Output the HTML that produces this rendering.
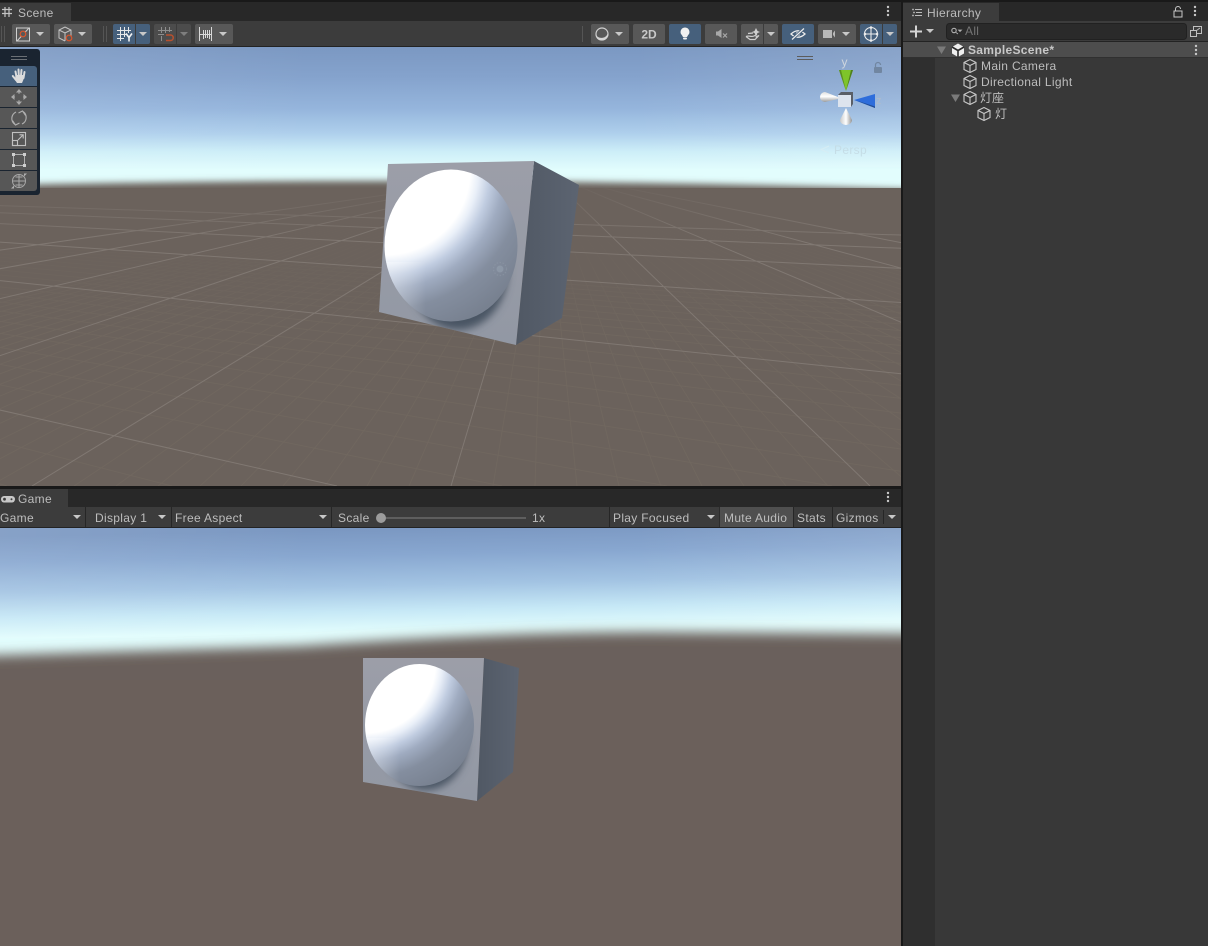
<!DOCTYPE html>
<html lang="en">
<head>
<meta charset="utf-8">
<title>Unity Editor</title>
<style>
html,body{margin:0;padding:0;background:#191919;width:1208px;height:946px;overflow:hidden}
svg{display:block;position:absolute;left:0;top:0}
text{font-family:"Liberation Sans","Noto Sans CJK SC",sans-serif;font-size:12px;letter-spacing:.32px;fill:#bdbdbd}
</style>
</head>
<body>
<svg width="1208" height="946" viewBox="0 0 1208 946" xmlns="http://www.w3.org/2000/svg">
<defs>
<linearGradient id="skyS" gradientUnits="userSpaceOnUse" x1="450" y1="47" x2="450" y2="170">
<stop offset="0" stop-color="#7b98c2"/><stop offset=".25" stop-color="#85a3cd"/><stop offset=".5" stop-color="#95b5dc"/><stop offset=".7" stop-color="#aecfec"/><stop offset=".85" stop-color="#cdeef8"/><stop offset="1" stop-color="#e2fdfd"/>
</linearGradient>
<linearGradient id="skyG" gradientUnits="userSpaceOnUse" x1="448" y1="528" x2="450" y2="630">
<stop offset="0" stop-color="#7b98c2"/><stop offset=".25" stop-color="#88a7d0"/><stop offset=".55" stop-color="#a3c4e3"/><stop offset=".8" stop-color="#c6e8f6"/><stop offset="1" stop-color="#e2fdfd"/>
</linearGradient>
<linearGradient id="edge" x1="0" x2="1" y1="0" y2="0">
<stop offset="0" stop-color="#fff" stop-opacity=".09"/><stop offset=".35" stop-color="#fff" stop-opacity="0"/><stop offset=".7" stop-color="#fff" stop-opacity="0"/><stop offset="1" stop-color="#fff" stop-opacity=".1"/>
</linearGradient>
<linearGradient id="fadeMin" gradientUnits="userSpaceOnUse" x1="0" y1="188" x2="0" y2="330">
<stop offset="0" stop-color="#6b625c" stop-opacity="1"/><stop offset=".4" stop-color="#6b625c" stop-opacity=".85"/><stop offset="1" stop-color="#6b625c" stop-opacity="0"/>
</linearGradient>
<linearGradient id="fadeMaj" gradientUnits="userSpaceOnUse" x1="0" y1="188" x2="0" y2="240">
<stop offset="0" stop-color="#6b625c" stop-opacity=".9"/><stop offset="1" stop-color="#6b625c" stop-opacity="0"/>
</linearGradient>
<filter id="b4" x="-5%" y="-20%" width="110%" height="140%"><feGaussianBlur stdDeviation="3.500"/></filter>
<filter id="b6" x="-5%" y="-20%" width="110%" height="140%"><feGaussianBlur stdDeviation="6"/></filter>
<filter id="sh" x="-30%" y="-30%" width="160%" height="160%"><feGaussianBlur stdDeviation="4"/></filter>
<clipPath id="cS"><rect x="0" y="47" width="901" height="439"/></clipPath>
<clipPath id="cG"><rect x="0" y="528" width="901" height="418"/></clipPath>
<clipPath id="cGrid"><rect x="0" y="188" width="901" height="298"/></clipPath>
<clipPath id="fS"><path d="M388 164L534 161 516 345 379 312Z"/></clipPath>
<clipPath id="fG"><path d="M363 658H484L477 801 363 782Z"/></clipPath>
<clipPath id="sS"><ellipse cx="451" cy="245.500" rx="66.500" ry="76"/></clipPath>
<clipPath id="sG"><ellipse cx="419.500" cy="725" rx="54.500" ry="61"/></clipPath>
<radialGradient id="ballS" gradientUnits="userSpaceOnUse" cx="385" cy="170" r="170">
<stop offset="0" stop-color="#fff"/><stop offset=".5" stop-color="#fff"/><stop offset=".55" stop-color="#e9eff8"/><stop offset=".62" stop-color="#c0cce0"/><stop offset=".7" stop-color="#9fabc0"/><stop offset=".82" stop-color="#848e9f"/><stop offset="1" stop-color="#788190"/>
</radialGradient>
<radialGradient id="ballG" gradientUnits="userSpaceOnUse" cx="365.500" cy="663" r="140">
<stop offset="0" stop-color="#fff"/><stop offset=".5" stop-color="#fff"/><stop offset=".55" stop-color="#e9eff8"/><stop offset=".62" stop-color="#c0cce0"/><stop offset=".7" stop-color="#9fabc0"/><stop offset=".82" stop-color="#848e9f"/><stop offset="1" stop-color="#788190"/>
</radialGradient>
<linearGradient id="lowL" x1="0" x2="1" y1="0" y2="0"><stop offset="0" stop-color="#fff" stop-opacity=".4"/><stop offset=".6" stop-color="#fff" stop-opacity="0"/></linearGradient>
<linearGradient id="sideS" x1="0" x2="1" y1="0" y2="0"><stop offset="0" stop-color="#505864"/><stop offset="1" stop-color="#5c6471"/></linearGradient>
<linearGradient id="frontS" x1="0" x2="0" y1="0" y2="1"><stop offset="0" stop-color="#9c9ea8"/><stop offset="1" stop-color="#9298a4"/></linearGradient>
<linearGradient id="wc" x1="0" x2="0" y1="0" y2="1"><stop offset="0" stop-color="#e0e0e0"/><stop offset=".45" stop-color="#ffffff"/><stop offset="1" stop-color="#9a9a9a"/></linearGradient>
<linearGradient id="wv" x1="0" x2="1" y1="0" y2="0"><stop offset="0" stop-color="#c8c8c8"/><stop offset=".5" stop-color="#ffffff"/><stop offset="1" stop-color="#949494"/></linearGradient>
<path id="a" d="M-4-2H4L0 2Z" fill="#c8c8c8"/>
<path id="ad" d="M-4-2H4L0 2Z" fill="#7e7e7e"/>
<g id="k" fill="#c8c8c8"><circle cx="0" cy="-4" r="1.200"/><circle cx="0" cy="0" r="1.200"/><circle cx="0" cy="4" r="1.200"/></g>
<g id="cube" fill="none" stroke="#c8c8c8" stroke-width="1.100"><path d="M0-6.500L6-3.500V3.500L0 6.500-6 3.500V-3.500Z"/><path d="M-6-3.500L0-.5 6-3.500M0-.5V6.500"/></g>
</defs>

<!-- chrome -->
<rect width="1208" height="946" fill="#191919"/>
<rect x="0" y="2" width="901" height="19" fill="#282828"/>
<rect x="0" y="3" width="71" height="18" fill="#3c3c3c"/>
<rect x="0" y="21" width="901" height="25" fill="#3c3c3c"/>
<rect x="0" y="46" width="901" height="1" fill="#232323"/>

<!-- scene view -->
<g clip-path="url(#cS)">
<rect x="0" y="47" width="901" height="160" fill="url(#skyS)"/>
<rect x="0" y="47" width="901" height="120" fill="url(#edge)"/>
<path d="M-30 186Q450 174 930 190V500H-30Z" fill="#6b625c" filter="url(#b4)"/>
<rect x="0" y="200" width="901" height="286" fill="#6b625c"/>
<g clip-path="url(#cGrid)">
<!-- minor grid -->
<path fill="none" stroke="#70675f" stroke-width="1" d="M545 172L493 486M545 172L535 486M545 172L577 486M545 172L619 486M545 172L661 486M545 172L702 486M545 172L744 486M545 172L786 486M545 172L828 486M545 172L912 486M545 172L954 486M545 172L996 486M545 172L1038 486M545 172L1080 486M545 172L1122 486M545 172L1164 486M545 172L1206 486M545 172L1248 486M545 172L1331 486M545 172L1373 486M545 172L1415 486M545 172L1457 486M545 172L1499 486M545 172L1541 486M545 172L1583 486M545 172L1625 486M545 172L1667 486M545 172L409 486M545 172L367 486M545 172L325 486M545 172L283 486M545 172L241 486M545 172L200 486M545 172L158 486M545 172L116 486M545 172L74 486M545 172L-10 486M545 172L-52 486M545 172L-94 486M545 172L-136 486M545 172L-178 486M545 172L-219 486M545 172L-261 486M545 172L-303 486M545 172L-345 486M545 172L-429 486M545 172L-471 486M545 172L-513 486M545 172L-555 486M545 172L-597 486M545 172L-638 486M545 172L-680 486M545 172L-722 486M545 172L-764 486M-1061 171L502 486M-1061 171L667 486M-1061 171L832 486M-1061 171L997 486M-1061 171L1162 486M-1061 171L1327 486M-1061 171L1492 486M-1061 171L1657 486M-1061 171L1822 486M-1061 171L2152 486M-1061 171L2317 486M-1061 171L2482 486M-1061 171L2647 486M-1061 171L2812 486M-1061 171L2977 486M-1061 171L3142 486M-1061 171L3307 486M-1061 171L3472 486M-1061 171L172 486M-1061 171L7 486M-1061 171L-158 486M-1061 171L-323 486M-1061 171L-488 486M-1061 171L-653 486M-1061 171L-818 486M-1061 171L-983 486"/>
<rect x="0" y="188" width="901" height="142" fill="url(#fadeMin)"/>
<!-- major grid -->
<path fill="none" stroke="#807872" stroke-width="1" d="M545 172L451 486M545 172L32 486M545 172L870 486M545 172L1289 486M545 172L1708 486M545 172L2127 486M545 172L-387 486M545 172L-806 486M545 172L-1225 486M545 172L-1644 486M-1061 171L337 486M-1061 171L1987 486M-1061 171L3637 486M-1061 171L5287 486M-1061 171L6937 486M-1061 171L8587 486"/>
<rect x="0" y="188" width="901" height="52" fill="url(#fadeMaj)"/>
</g>
<!-- cube -->
<path d="M534 161L579 185 562 318 516 345Z" fill="url(#sideS)"/>
<path d="M388 164L534 161 516 345 379 312Z" fill="url(#frontS)"/>
<g clip-path="url(#fS)"><ellipse cx="458" cy="270" rx="50" ry="60" fill="#4a5464" filter="url(#sh)"/></g>
<ellipse cx="451" cy="245.500" rx="66.500" ry="76" fill="url(#ballS)"/>
<g clip-path="url(#sS)">
<rect x="384" y="262" width="70" height="60" fill="url(#lowL)"/>
</g>
<circle cx="500" cy="269" r="3.500" fill="#9aa5b3" opacity=".5"/>
<circle cx="500" cy="269" r="6.500" fill="none" stroke="#8f9aa8" stroke-width="1.300" stroke-dasharray="1.500 1.500" opacity=".5"/>
<!-- drag handle -->
<path d="M797 56.500H813M797 59.500H813" stroke="#5c5c5c" stroke-width="1"/>
<!-- gizmo -->
<g>
<rect x="874" y="67" width="8" height="6" rx="1" fill="#7186a1"/>
<path d="M875.500 67V65a2.500 2.500 0 0 1 5 0" fill="none" stroke="#7186a1" stroke-width="1.200"/>
<text x="841.500" y="66" style="font-size:12px;letter-spacing:0;fill:#cdd5de">y</text>
<text x="876" y="104" style="font-size:11px;letter-spacing:0;fill:#aebccd">z</text>
<path d="M839 70H853L846 91Z" fill="#7ec42a"/>
<path d="M851 70H853L846 91Z" fill="#4f7f1e"/>
<path d="M841 70H839L846 91Z" fill="#5b8f20"/>
<path d="M854 100L875 94V108Z" fill="#2e6ddb"/>
<path d="M855 100L875 106.500V108Z" fill="#224d92"/>
<path d="M825 92L838 97V99L825 102A5 5 0 0 1 825 92Z" fill="url(#wc)"/>
<path d="M846 108L852 120A6 5 0 0 1 840 120Z" fill="url(#wv)"/>
<path d="M838 95L841 92H853V104L851 107H838Z" fill="#5a5f67"/>
<rect x="838" y="95" width="13" height="12" fill="#dde4ee"/>
<text x="834" y="154" style="font-size:12px;fill:#c5dde6">Persp</text>
<path d="M829 146L821 149.500 829 153" fill="none" stroke="#d6edf4" stroke-width="1"/>
</g>
<!-- tools panel -->
<path d="M0 49H37a3 3 0 0 1 3 3V192a3 3 0 0 1-3 3H0Z" fill="#1a2430"/>
<path d="M11 56.500H27M11 59.500H27" stroke="#6b7075" stroke-width="1"/>
<path d="M0 66H34a3 3 0 0 1 3 3V86H0Z" fill="#46607c"/>
<rect x="0" y="87" width="37" height="20" fill="#575757"/>
<rect x="0" y="108" width="37" height="20" fill="#575757"/>
<rect x="0" y="129" width="37" height="20" fill="#575757"/>
<rect x="0" y="150" width="37" height="20" fill="#575757"/>
<path d="M0 171H37V188a3 3 0 0 1-3 3H0Z" fill="#575757"/>
<!-- hand -->
<g stroke="#dcdcdc" stroke-width="2" stroke-linecap="round" fill="none"><path d="M15.500 71.500L16.500 77M18.500 69.500L18.800 76M21.500 70L21 76M24.500 72L23.500 78M12.800 76L16 80"/></g>
<path d="M15.500 75H24L23.500 79.500 22 83H17L15 80Z" fill="#dcdcdc"/>
<!-- move -->
<g fill="none" stroke="#a0a0a0" stroke-width="1"><path d="M19 90V94M19 100V104M12 97H15M23 97H26"/></g>
<g fill="#a8a8a8"><path d="M19 89L22 92.500H16ZM19 105L22 101.500H16ZM11 97L14.500 94V100ZM27 97L23.500 94V100Z"/></g>
<!-- rotate -->
<g fill="none" stroke="#b0b0b0" stroke-width="1.100"><path d="M15 124.500A7.200 7.200 0 0 1 16 112M23 111.500A7.200 7.200 0 0 1 22 124"/><path d="M12.500 120.500L15.500 125 19.500 123M25.500 115.500L22.500 111 18.500 113"/></g>
<!-- scale -->
<g fill="none" stroke="#c0c0c0" stroke-width="1.100"><rect x="12.500" y="132.500" width="13" height="13"/><rect x="12.500" y="140.500" width="5" height="5"/><path d="M18 140L23 135M19.500 134.800H23.200V138.500"/></g>
<!-- rect -->
<g fill="none" stroke="#b0b0b0" stroke-width="1"><rect x="13.500" y="154.500" width="11" height="11"/></g>
<g fill="#cfcfcf"><rect x="12" y="153" width="3" height="3"/><rect x="23" y="153" width="3" height="3"/><rect x="12" y="164" width="3" height="3"/><rect x="23" y="164" width="3" height="3"/></g>
<!-- transform -->
<g fill="none" stroke="#a8a8a8" stroke-width="1"><circle cx="19" cy="181" r="6.500"/><path d="M19 175V187M13 181H25M15.500 177H22.500M15.500 185H22.500"/></g>
<path d="M11 188.500L14 185.500V188.500ZM27 173.500L24 176.500V173.500Z" fill="#b0b0b0"/>
</g>

<!-- scene tab -->
<g fill="none" stroke="#c4c4c4" stroke-width="1.200"><path d="M5 7V17M9 7V17M2 9.500H12M2 13.500H12"/></g>
<text x="18" y="17">Scene</text>
<use href="#k" x="888" y="11"/>

<!-- scene toolbar -->
<path d="M1.500 26V42M4.500 26V42M103.500 26V42M106.500 26V42M582.500 26V42" stroke="#555" stroke-width="1"/>
<rect x="12" y="24" width="38" height="20" rx="2" fill="#585858"/>
<rect x="16.500" y="28" width="13" height="13" fill="none" stroke="#cfcfcf" stroke-width="1"/>
<path d="M17 41L29 28" stroke="#cfcfcf" stroke-width="1"/>
<circle cx="23" cy="34" r="2.800" fill="#585858" stroke="#d9542b" stroke-width="1.200"/>
<use href="#a" x="40" y="34"/>
<rect x="54" y="24" width="38" height="20" rx="2" fill="#585858"/>
<g fill="none" stroke="#c4c4c4" stroke-width="1"><path d="M65 27L71 30V36M65 27L59 30V38L65 41M59 30L65 33 71 30M65 33V41"/></g>
<circle cx="69" cy="38" r="2.800" fill="#585858" stroke="#d9542b" stroke-width="1.200"/>
<use href="#a" x="82" y="34"/>

<path d="M115 24H135V44H115a2 2 0 0 1-2-2V26a2 2 0 0 1 2-2Z" fill="#46607c"/>
<path d="M136 24H148a2 2 0 0 1 2 2V42a2 2 0 0 1-2 2H136Z" fill="#46607c"/>
<g fill="none" stroke="#e8e8e8" stroke-width="1"><path d="M120.500 27V41M124.500 27V37M128.500 27V33M117 30.500H131M117 34.500H127M117 38.500H124"/></g>
<path d="M126 33.500L129 37.500 132 33.500M129 37.500V41.500" fill="none" stroke="#f4f4f4" stroke-width="1.600"/>
<use href="#a" x="143" y="34"/>

<path d="M156 24H176V44H156a2 2 0 0 1-2-2V26a2 2 0 0 1 2-2Z" fill="#4c4c4c"/>
<path d="M177 24H189a2 2 0 0 1 2 2V42a2 2 0 0 1-2 2H177Z" fill="#4c4c4c"/>
<g fill="none" stroke="#8e8e8e" stroke-width="1"><path d="M161.500 27V33M161.500 36V41M165.500 27V33M169.500 27V32M158 30.500H172M158 34.500H164"/></g>
<path d="M166 35H170.500a2.700 2.700 0 0 1 0 5.500H166" fill="none" stroke="#b8502e" stroke-width="1.500"/>
<use href="#ad" x="184" y="34"/>

<rect x="195" y="24" width="38" height="20" rx="2" fill="#585858"/>
<path d="M199.500 27V41M211.500 27V41M203.500 30V39M205.500 30V38M207.500 30V38M209.500 30V39M200 34.500H212" stroke="#d8d8d8" stroke-width="1" fill="none"/>
<use href="#a" x="223" y="34"/>

<rect x="591" y="24" width="38" height="20" rx="2" fill="#585858"/>
<circle cx="602" cy="34" r="6" fill="none" stroke="#cfcfcf" stroke-width="1.200"/>
<path d="M596.500 36.500C598 41.500 606.500 41.500 608 34 606 39 600 39.500 596.500 36.500Z" fill="#d4d4d4" stroke="#d4d4d4" stroke-width="1"/>
<use href="#a" x="619" y="34"/>
<rect x="633" y="24" width="32" height="20" rx="2" fill="#585858"/>
<text x="649" y="38.500" text-anchor="middle" style="font-weight:bold;letter-spacing:0;font-size:12px;fill:#c8c8c8">2D</text>
<rect x="669" y="24" width="32" height="20" rx="2" fill="#46607c"/>
<path d="M685 27.500a4.500 4.500 0 0 1 3 7.800L687 37H683L682 35.300A4.500 4.500 0 0 1 685 27.500Z" fill="#f0f0f0"/>
<rect x="683" y="37.500" width="4" height="2" rx="1" fill="#f0f0f0"/>
<rect x="705" y="24" width="32" height="20" rx="2" fill="#585858"/>
<path d="M716 31.500H718L721.500 29V38L718 35.500H716Z" fill="#a8a8a8"/>
<path d="M723 33.500L727 37.500M727 33.500L723 37.500" stroke="#a8a8a8" stroke-width="1.200"/>
<path d="M743 24H763V44H743a2 2 0 0 1-2-2V26a2 2 0 0 1 2-2Z" fill="#585858"/>
<path d="M764 24H776a2 2 0 0 1 2 2V42a2 2 0 0 1-2 2H764Z" fill="#585858"/>
<path d="M746 36.500C749 35 751 37.500 754 36L757 34.500M746 36.500L750 39.500H755L759 35.500 755.500 37M748 33.500L753 33" fill="none" stroke="#cfcfcf" stroke-width="1.200"/>
<path d="M756 28L757.500 31 760 32 757.500 33 756 36 754.500 33 752 32 754.500 31Z" fill="#cfcfcf"/>
<use href="#a" x="771" y="34"/>
<rect x="782" y="24" width="32" height="20" rx="2" fill="#46607c"/>
<path d="M791 34Q798 27.500 805 34Q798 40.500 791 34Z" fill="none" stroke="#ececec" stroke-width="1.300"/>
<circle cx="798" cy="34" r="2.200" fill="#ececec"/>
<path d="M792 39.500L804 28.500" stroke="#46607c" stroke-width="3"/>
<path d="M792 39.500L804 28.500" stroke="#ececec" stroke-width="1.200"/>
<rect x="818" y="24" width="38" height="20" rx="2" fill="#585858"/>
<rect x="823" y="30" width="9" height="8" fill="#b8b8b8"/>
<path d="M833 33L835 30.500V37.500L833 35Z" fill="#b8b8b8"/>
<use href="#a" x="846" y="34"/>
<path d="M862 24H882V44H862a2 2 0 0 1-2-2V26a2 2 0 0 1 2-2Z" fill="#46607c"/>
<path d="M883 24H895a2 2 0 0 1 2 2V42a2 2 0 0 1-2 2H883Z" fill="#46607c"/>
<g fill="none" stroke="#ececec" stroke-width="1.100"><circle cx="871" cy="34" r="6.500"/><path d="M864.500 34H877.500M871 27.500V40.500"/></g>
<g fill="#ececec"><circle cx="871" cy="27.500" r="1.300"/><circle cx="865" cy="34" r="1.300"/><circle cx="877" cy="34" r="1.300"/><circle cx="871" cy="40.500" r="1.300"/></g>
<use href="#a" x="890" y="34"/>

<!-- game panel -->
<rect x="0" y="489" width="901" height="18" fill="#282828"/>
<rect x="0" y="489" width="68" height="18" fill="#3c3c3c"/>
<rect x="0" y="507" width="901" height="20" fill="#3c3c3c"/>
<rect x="0" y="527" width="901" height="1" fill="#232323"/>
<rect x="1" y="496" width="14" height="6.500" rx="3.200" fill="#c8c8c8"/>
<circle cx="4.500" cy="499.200" r="1.400" fill="#3c3c3c"/><circle cx="11.500" cy="499.200" r="1" fill="#3c3c3c"/>
<text x="18" y="503">Game</text>
<use href="#k" x="888" y="497"/>
<path d="M85.500 507V527M171.500 507V527M331.500 507V527M609.500 507V527M793.500 507V527M832.500 507V527" stroke="#262626" stroke-width="1"/>
<rect x="720" y="507" width="73" height="20" fill="#4f4f4f"/>
<path d="M719.500 507V527" stroke="#2c2c2c"/>
<path d="M883.500 510V524" stroke="#262626"/>
<text x="0" y="522">Game</text><use href="#a" x="77" y="517"/>
<text x="95" y="522">Display 1</text><use href="#a" x="162" y="517"/>
<text x="175" y="522">Free Aspect</text><use href="#a" x="323" y="517"/>
<text x="338" y="522">Scale</text>
<rect x="381" y="517" width="145" height="2" fill="#5e5e5e"/>
<circle cx="381" cy="518" r="5" fill="#9c9c9c"/>
<text x="532" y="522">1x</text>
<text x="613" y="522">Play Focused</text><use href="#a" x="711" y="517"/>
<text x="724" y="522">Mute Audio</text>
<text x="797" y="522">Stats</text>
<text x="836" y="522">Gizmos</text><use href="#a" x="892" y="517"/>

<!-- game view -->
<g clip-path="url(#cG)">
<rect x="0" y="528" width="901" height="160" fill="url(#skyG)"/>
<rect x="0" y="528" width="901" height="110" fill="url(#edge)"/>
<path d="M-30 656L300 646Q500 632 650 632L930 634V960H-30Z" fill="#6b605b" filter="url(#b6)"/>
<rect x="0" y="680" width="901" height="266" fill="#6b605b"/>
<path d="M484 658L519 668 513 772 477 801Z" fill="url(#sideS)"/>
<path d="M363 658H484L477 801 363 782Z" fill="url(#frontS)"/>
<g clip-path="url(#fG)"><ellipse cx="426" cy="742" rx="41" ry="48" fill="#4a5464" filter="url(#sh)"/></g>
<ellipse cx="419.500" cy="725" rx="54.500" ry="61" fill="url(#ballG)"/>
<g clip-path="url(#sG)">
<rect x="365" y="738" width="58" height="50" fill="url(#lowL)"/>
</g>
</g>

<!-- hierarchy -->
<rect x="903" y="2" width="305" height="19" fill="#282828"/>
<rect x="903" y="3" width="96" height="18" fill="#3c3c3c"/>
<rect x="903" y="21" width="305" height="20" fill="#3c3c3c"/>
<rect x="903" y="41" width="305" height="905" fill="#383838"/>
<rect x="903" y="41" width="32" height="905" fill="#2f2f2f"/>
<rect x="903" y="41" width="305" height="1" fill="#232323"/>
<rect x="903" y="42" width="305" height="15" fill="#4d4d4d"/>
<rect x="903" y="57" width="305" height="1" fill="#303030"/>
<g fill="none" stroke="#bdbdbd" stroke-width="1"><path d="M915 9.500H922M916 12.500H922M915 15.500H922"/></g>
<circle cx="913" cy="9.500" r=".9" fill="#bdbdbd"/><circle cx="914" cy="12.500" r=".9" fill="#bdbdbd"/><circle cx="913" cy="15.500" r=".9" fill="#bdbdbd"/>
<text x="927" y="17">Hierarchy</text>
<rect x="1174" y="11" width="8" height="6" fill="none" stroke="#c8c8c8" stroke-width="1"/>
<path d="M1175.500 11V9a2.500 2.500 0 0 1 5 0" fill="none" stroke="#c8c8c8" stroke-width="1"/>
<use href="#k" x="1195" y="11"/>
<path d="M916 25.500V37.500M910 31.500H922" stroke="#d4d4d4" stroke-width="2"/>
<use href="#a" x="930" y="31"/>
<rect x="946.500" y="23.500" width="240" height="16" rx="3" fill="#2a2a2a" stroke="#212121"/>
<circle cx="954" cy="30.500" r="2.200" fill="none" stroke="#b0b0b0" stroke-width="1.100"/>
<path d="M956 32.500L958 34M958.500 30H961.500L960 31.500Z" stroke="#b0b0b0" fill="#b0b0b0" stroke-width=".8"/>
<text x="965" y="35" style="fill:#757575">All</text>
<rect x="1187" y="23" width="16" height="17" fill="#3c3c3c"/>
<g fill="none" stroke="#c0c0c0" stroke-width="1"><rect x="1190.500" y="30.500" width="6" height="6"/><path d="M1193.500 30.500V26.500H1201.500V33.500H1196.500M1196.500 30.500L1200 28"/></g>
<path d="M937 46.500H946L941.500 54Z" fill="#7a7a7a"/>
<path d="M958 43.500L964 47V53.500L958 57 952 53.500V47Z" fill="#efefef"/>
<path d="M958 50.500V57M958 50.500L952 47M958 50.500L964 47" stroke="#2c2c2c" stroke-width="1.600"/>
<text x="968" y="54" style="font-weight:bold;fill:#c8c8c8;letter-spacing:.3px">SampleScene*</text>
<use href="#k" x="1196" y="50" />
<use href="#cube" x="970" y="66"/>
<text x="981" y="70">Main Camera</text>
<use href="#cube" x="970" y="82"/>
<text x="981" y="86">Directional Light</text>
<path d="M951 94.500H960L955.500 102Z" fill="#7a7a7a"/>
<use href="#cube" x="970" y="98"/>
<text x="980" y="102" style="letter-spacing:0">灯座</text>
<use href="#cube" x="984" y="114"/>
<text x="995" y="118" style="letter-spacing:0">灯</text>
</svg>
</body>
</html>
